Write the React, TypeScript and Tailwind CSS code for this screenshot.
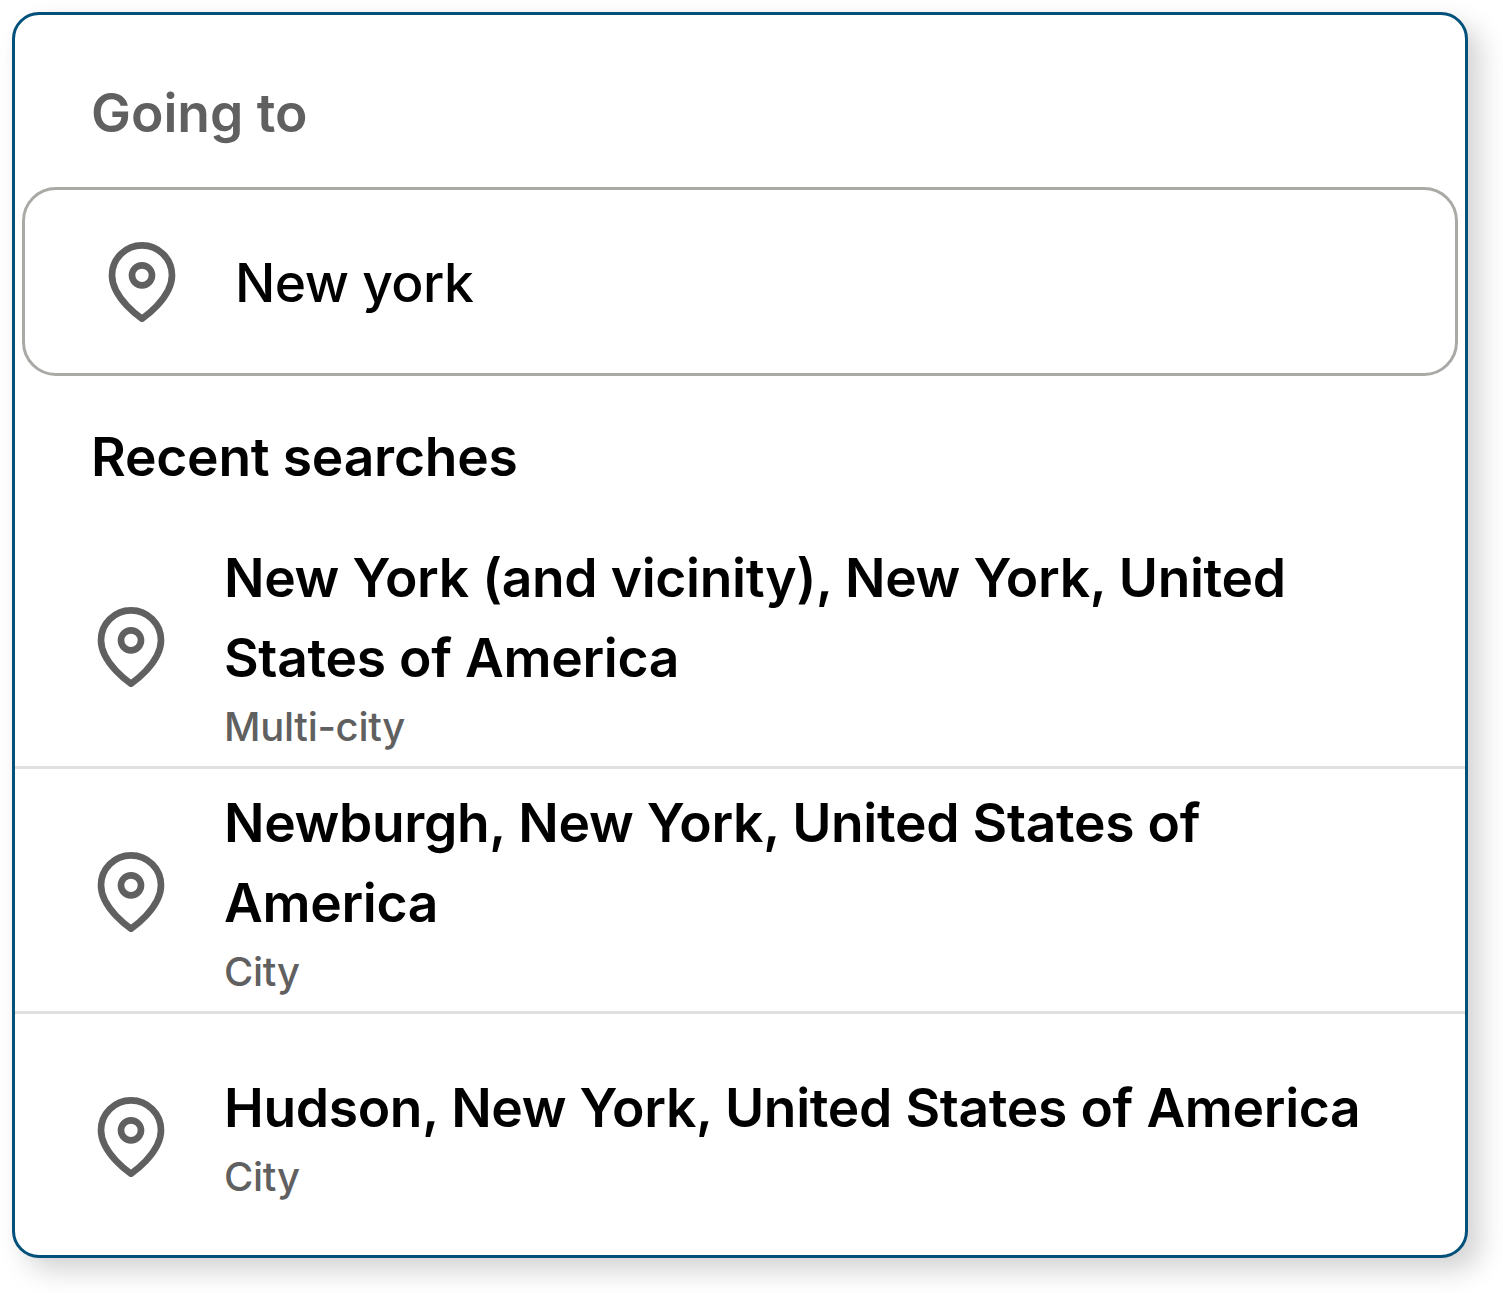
import React from 'react';

interface Place {
  id: string;
  name: string;
  type: string;
}

const RECENT_SEARCHES: Place[] = [
  { id: 'new-york', name: 'New York (and vicinity), New York, United States of America', type: 'Multi-city' },
  { id: 'newburgh', name: 'Newburgh, New York, United States of America', type: 'City' },
  { id: 'hudson', name: 'Hudson, New York, United States of America', type: 'City' },
];

function PinIcon() {
  return (
    <svg
      viewBox="0 0 24 24"
      fill="none"
      stroke="currentColor"
      strokeWidth="2"
      strokeLinecap="round"
      strokeLinejoin="round"
      className="size-20 shrink-0 overflow-visible text-[#606060]"
    >
      <path d="M21 10c0 7-9 13-9 13s-9-6-9-13a9 9 0 0 1 18 0z" />
      <circle cx="12" cy="10" r="3" />
    </svg>
  );
}

function PlaceItem({ place }: { place: Place }) {
  return (
    <li className="flex h-[245px] items-center gap-[53px] border-b-3 border-[#e0e0e0] px-[76px] pt-1 last:border-b-0 last:pt-0">
      <PinIcon />
      <div className="min-w-0 flex-1">
        <p className="text-[53.33px] leading-[80px] font-semibold tracking-[-0.32px] text-black [word-spacing:0.3px]">
          {place.name}
        </p>
        <p className="text-[40px] leading-[58px] font-medium tracking-[-0.3px] text-[#606060]">{place.type}</p>
      </div>
    </li>
  );
}

export default function App() {
  const [query, setQuery] = React.useState('New york');

  return (
    <div className="h-[1293px] w-[1503px] overflow-hidden bg-white p-3 font-['Inter',sans-serif]">
      <div className="flex h-[1246px] w-[1456px] flex-col rounded-[27px] border-3 border-[#00507a] bg-white shadow-[13px_13px_27px_rgba(0,0,0,0.17),0_0_13px_rgba(0,0,0,0.02)]">
        <label htmlFor="destination" className="mt-[58px] ml-[76px] text-[53.33px] leading-[80px] font-semibold text-[#606060]">
          Going to
        </label>

        <div className="mx-[7px] mt-[34px] flex h-[189px] shrink-0 items-center gap-[53px] rounded-[34px] border-3 border-[#aaa9a5] pl-[77px]">
          <PinIcon />
          <input
            id="destination"
            value={query}
            onChange={(e) => setQuery(e.target.value)}
            className="h-[82px] min-w-0 flex-1 pt-[2px] text-[53.33px] leading-[80px] font-medium tracking-[-0.5px] text-black outline-none"
          />
        </div>

        <h2 className="mt-[41px] ml-[76px] text-[53.33px] leading-[80px] font-semibold tracking-[-0.2px] text-black">Recent searches</h2>

        <ul className="mt-[27px]">
          {RECENT_SEARCHES.map((place) => (
            <PlaceItem key={place.id} place={place} />
          ))}
        </ul>
      </div>
    </div>
  );
}
